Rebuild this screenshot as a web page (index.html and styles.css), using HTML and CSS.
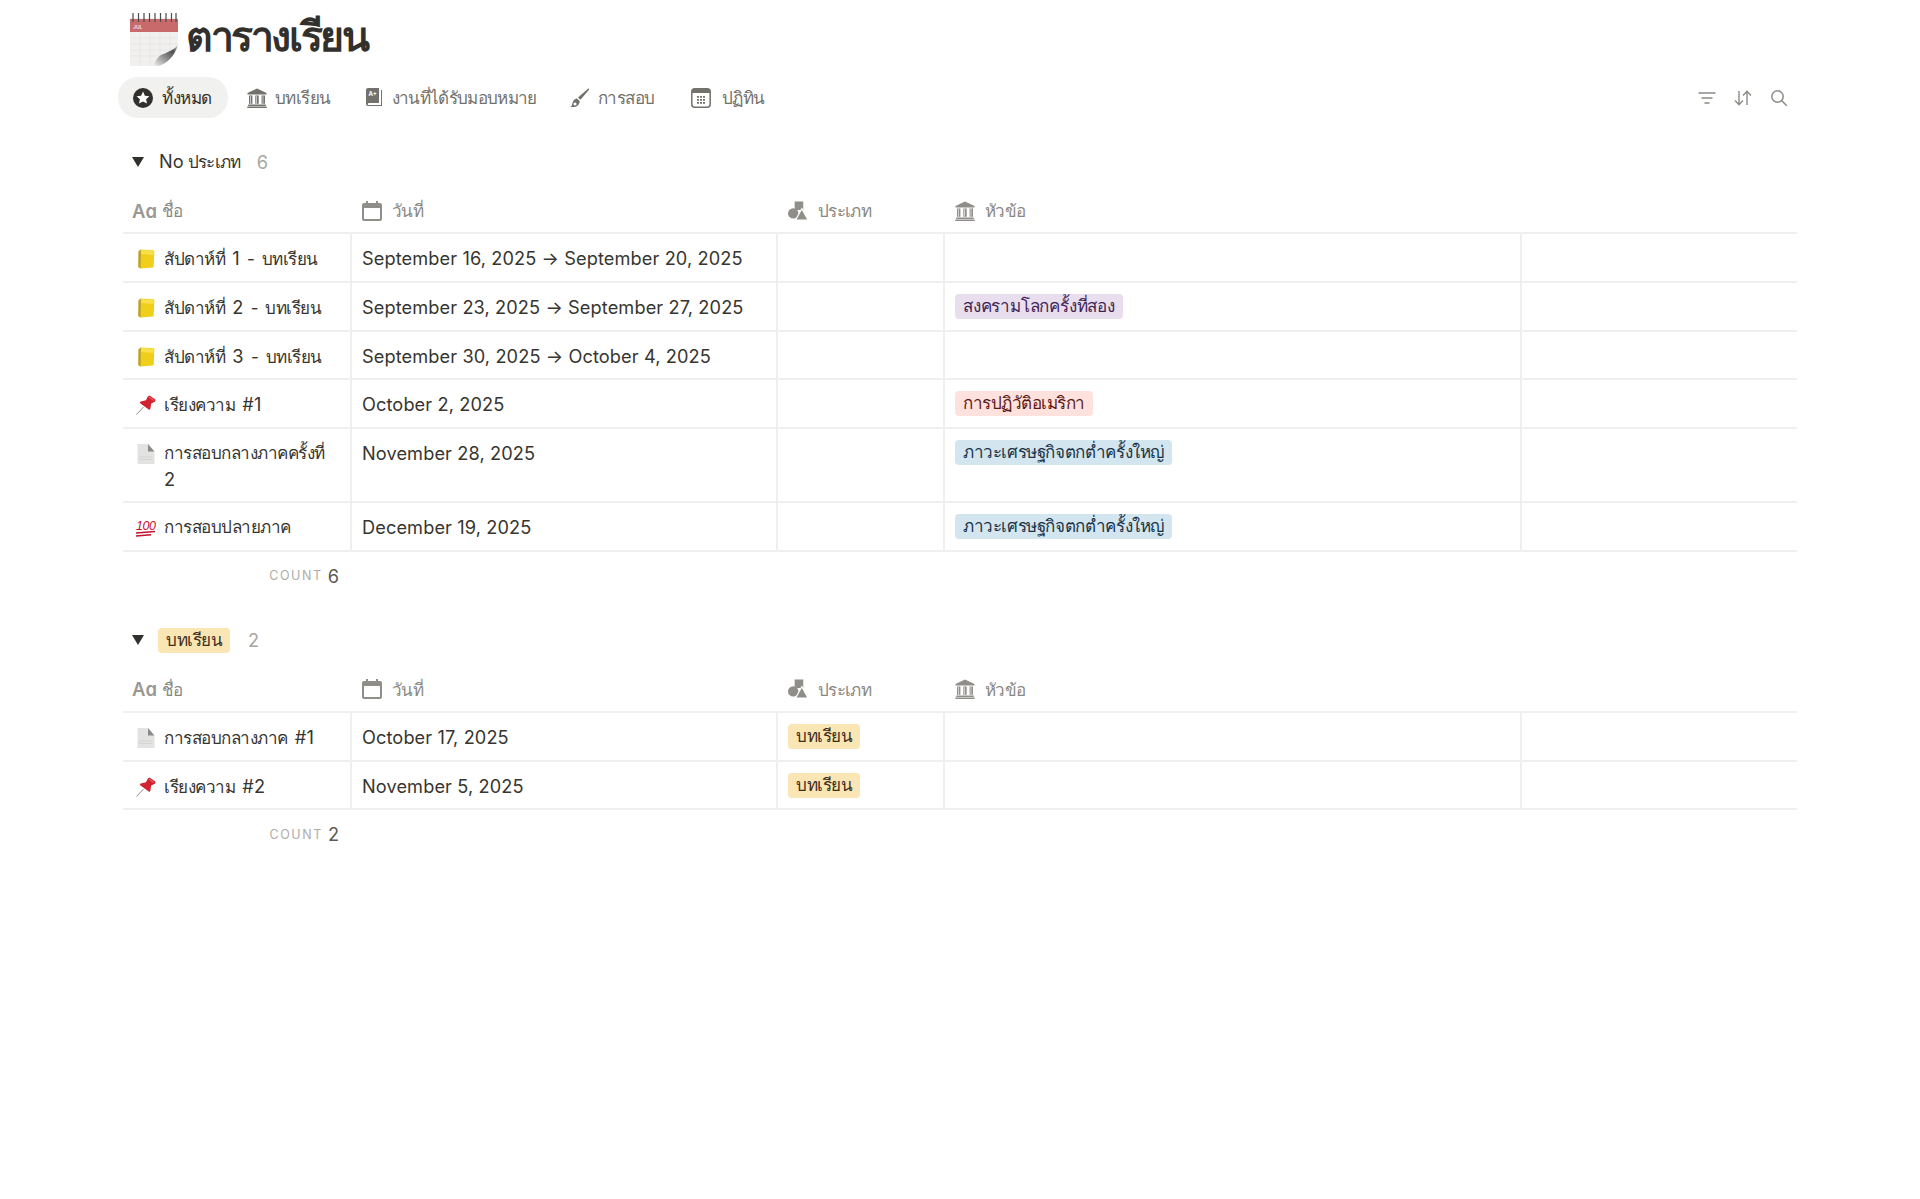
FILE: index.html
```html
<!DOCTYPE html>
<html lang="th">
<head>
<meta charset="utf-8">
<title>ตารางเรียน</title>
<link rel="stylesheet" href="styles.css">
</head>
<body>
<svg class="defs" width="0" height="0" aria-hidden="true">
  <defs>
    <linearGradient id="curl" x1="0" y1="1" x2="1" y2="0"><stop offset="0" stop-color="#f4f4f4"/><stop offset=".45" stop-color="#8c8c8c"/><stop offset=".75" stop-color="#4f4f4f"/><stop offset="1" stop-color="#c4c4c4"/></linearGradient>
    <symbol id="i-bank" viewBox="0 0 20 20"><path fill="currentColor" d="M10 .5 19.500 5v1.600H.5V5zM2 7.600h3.400v8.200H2zM8.300 7.600h3.400v8.200H8.300zM14.600 7.600H18v8.200h-3.400zM1.200 16.600h17.600V18H1.200zM.3 18.400h19.400V20H.3z"/><path fill="#fff" d="M3.100 7.900h.6v7.600h-.6zM9.400 7.900h.6v7.600h-.6zM15.700 7.900h.6v7.600h-.6z"/></symbol>
    <symbol id="i-cal" viewBox="0 0 20 20"><path fill="currentColor" fill-rule="evenodd" d="M4 0h2v2h8V0h2v2h2a2 2 0 0 1 2 2v14a2 2 0 0 1-2 2H2a2 2 0 0 1-2-2V4a2 2 0 0 1 2-2h2zM2 7v10.500a.5.500 0 0 0 .5.500h15a.5.500 0 0 0 .5-.500V7z"/></symbol>
    <symbol id="i-shapes" viewBox="0 0 21 20"><circle cx="5.500" cy="12.500" r="5.500" fill="currentColor"/><rect x="7" y="0" width="9" height="9" fill="currentColor"/><path d="M14.500 7.500 21 19.500H8z" fill="currentColor" stroke="#fff" stroke-width="1.200"/></symbol>
    <symbol id="i-note" viewBox="0 0 20 20"><path d="M3 1.500 5 .5l12.500.8c.5 0 .8.4.8.9l-.6 15.400c0 .5-.5.9-1 .9L4.500 19.500 2.400 18.200z" fill="#f0cf1a"/><path d="M2.400 2.400 5 .6l-.4 18.800-2.300-1.300z" fill="#b9a22c"/><path d="M5 1 17.600 1.700 17.300 6 5 5z" fill="#f7e04a"/></symbol>
    <symbol id="i-pin" viewBox="0 0 20 20"><path d="M.5 19.500 7.500 12" stroke="#8a8f99" stroke-width="1" fill="none"/><path d="M4.800 6.500 10 5.300 11.800 1.600c.4-.9 1.500-1.200 2.400-.7l4.800 3.400c.8.700.7 1.900-.2 2.400l-3.600 1.900L14.300 14c-.2.800-1 1-1.600.5L4.200 8.300c-.5-.5-.2-1.500.6-1.800z" fill="#d3222f"/><path d="M12.800 2 17.800 5.500" stroke="#f0737b" stroke-width="1" fill="none"/></symbol>
    <symbol id="i-doc" viewBox="0 0 20 20"><path d="M1.500 0H12l6.500 8v12h-17z" fill="#e3e3e1"/><path d="M12 0v7.500h6.500z" fill="#8b8b8b"/><path d="M3 13h13M3 15.500h13" stroke="#d0d0ce" stroke-width=".8"/></symbol>
  </defs>
</svg>

<div class="page">
  <header class="title-row">
    <svg class="title-icon" viewBox="0 0 48 54" aria-hidden="true">
      <rect x="0" y="6" width="48" height="48" fill="#f1f0ef"/>
      <rect x="0" y="7" width="48" height="13" fill="#c86a6c"/>
      <g stroke="#e2e1e0" stroke-width=".6"><path d="M0 26h48M0 32h48M0 38h48M0 44h48M10 20v34M20 20v34M30 20v34M40 20v34"/></g>
      <g stroke="#4a4a4a" stroke-width="1.200" fill="none"><path d="M3 1v9M8.500 1v9M14 1v9M19.500 1v9M25 1v9M30.500 1v9M36 1v9M41.500 1v9M46 1v9"/></g>
      <text x="3" y="17" class="cal-text">JUL</text>
      <path d="M48 34 48 54 26 54C36 50 43 42 48 34z" fill="#fff"/>
      <path d="M48 33c-4 5-10 7-17 10-3 2-6 6-8 11h6c8-3 15-9 19-21z" fill="url(#curl)"/>
    </svg>
    <h1 class="title">ตารางเรียน</h1>
  </header>

  <nav class="toolbar">
    <ul class="tabs">
      <li class="tab tab-active">
        <svg class="tab-icon" viewBox="0 0 20 20" aria-hidden="true"><circle cx="10" cy="10" r="10" fill="#32302c"/><path d="m10 3.600 1.900 4.100 4.500.5-3.300 3 .9 4.400L10 13.400l-4 2.200.9-4.400-3.300-3 4.500-.5z" fill="#fff"/></svg>
        ทั้งหมด
      </li>
      <li class="tab"><svg class="tab-icon"><use href="#i-bank"/></svg>บทเรียน</li>
      <li class="tab tab-narrow">
        <svg class="tab-icon" viewBox="0 0 20 20" aria-hidden="true"><path fill="currentColor" d="M2 2a2 2 0 0 1 2-2h11v15H4.500A2.500 2.500 0 0 0 3.800 16.900H17V2h1v16H4a2 2 0 0 1-2-2z"/><text x="4.500" y="8" class="book-text">A+</text></svg>
        งานที่ได้รับมอบหมาย
      </li>
      <li class="tab">
        <svg class="tab-icon" viewBox="0 0 20 20" aria-hidden="true"><path fill="currentColor" d="M18.800.8c.4.300.3.800 0 1.200L10.500 11.800 8 9.500 17.700.9c.3-.3.800-.4 1.100-.1z"/><path fill="currentColor" fill-rule="evenodd" d="M7 10.500 9.700 13c0 2.500-1.500 5.500-5.500 6-1.500.2-3 0-3.700-.5 1.500-.5 1.700-2 2-3.500.5-2.500 2-4.200 4.500-4.500zM5 14.500a1.500 1.500 0 1 0 .01 0z"/></svg>
        การสอบ
      </li>
      <li class="tab tab-cal">
        <svg class="tab-icon" viewBox="0 0 20 20" aria-hidden="true"><rect x=".8" y=".8" width="18.400" height="18.400" rx="3" fill="none" stroke="currentColor" stroke-width="1.500"/><path d="M1 1h18v4H1z" fill="currentColor"/><path d="M6 8h2v1.800H6zM9 8h2v1.800H9zM12 8h2v1.800h-2zM6 11h2v1.800H6zM9 11h2v1.800H9zM12 11h2v1.800h-2zM6 14h2v1.800H6zM9 14h2v1.800H9zM12 14h2v1.800h-2z" fill="currentColor"/></svg>
        ปฏิทิน
      </li>
    </ul>
    <div class="tools">
      <svg class="tool" viewBox="0 0 18 18" aria-hidden="true"><path d="M.5 4h17M3.500 9h11M6.500 14h5" stroke="currentColor" stroke-width="1.500" fill="none"/></svg>
      <svg class="tool" viewBox="0 0 18 18" aria-hidden="true"><path d="M5 2v13.500M1 11.500l4 4.300 4-4.300M13 16V2.500M9 6.500l4-4.300 4 4.300" stroke="currentColor" stroke-width="1.400" fill="none"/></svg>
      <svg class="tool" viewBox="0 0 18 18" aria-hidden="true"><circle cx="7.500" cy="7.500" r="5.700" stroke="currentColor" stroke-width="1.500" fill="none"/><path d="m11.800 11.800 5 5" stroke="currentColor" stroke-width="1.500"/></svg>
    </div>
  </nav>

  <section class="group">
    <div class="group-head">
      <span class="caret"></span>
      <span class="group-name"><span class="lat">No</span> ประเภท</span>
      <span class="group-count">6</span>
    </div>
    <div class="row head">
      <div class="hcell"><span class="aa">Aɑ</span>ชื่อ</div>
      <div class="hcell"><svg class="hicon"><use href="#i-cal"/></svg>วันที่</div>
      <div class="hcell"><svg class="hicon"><use href="#i-shapes"/></svg>ประเภท</div>
      <div class="hcell"><svg class="hicon"><use href="#i-bank"/></svg>หัวข้อ</div>
      <div class="hcell"></div>
    </div>
    <div class="row">
      <div class="cell name"><svg class="emoji"><use href="#i-note"/></svg><span>สัปดาห์ที่ <span class="lat">1</span> - บทเรียน</span></div>
      <div class="cell date">September 16, 2025 → September 20, 2025</div>
      <div class="cell"></div><div class="cell"></div><div class="cell last"></div>
    </div>
    <div class="row">
      <div class="cell name"><svg class="emoji"><use href="#i-note"/></svg><span>สัปดาห์ที่ <span class="lat">2</span> - บทเรียน</span></div>
      <div class="cell date">September 23, 2025 → September 27, 2025</div>
      <div class="cell"></div>
      <div class="cell"><span class="tag purple">สงครามโลกครั้งที่สอง</span></div>
      <div class="cell last"></div>
    </div>
    <div class="row">
      <div class="cell name"><svg class="emoji"><use href="#i-note"/></svg><span>สัปดาห์ที่ <span class="lat">3</span> - บทเรียน</span></div>
      <div class="cell date">September 30, 2025 → October 4, 2025</div>
      <div class="cell"></div><div class="cell"></div><div class="cell last"></div>
    </div>
    <div class="row">
      <div class="cell name"><svg class="emoji"><use href="#i-pin"/></svg><span>เรียงความ <span class="lat">#1</span></span></div>
      <div class="cell date">October 2, 2025</div>
      <div class="cell"></div>
      <div class="cell"><span class="tag red">การปฏิวัติอเมริกา</span></div>
      <div class="cell last"></div>
    </div>
    <div class="row tall">
      <div class="cell name"><svg class="emoji"><use href="#i-doc"/></svg><span>การสอบกลางภาคครั้งที่ <span class="lat">2</span></span></div>
      <div class="cell date">November 28, 2025</div>
      <div class="cell"></div>
      <div class="cell"><span class="tag blue">ภาวะเศรษฐกิจตกต่ำครั้งใหญ่</span></div>
      <div class="cell last"></div>
    </div>
    <div class="row">
      <div class="cell name"><svg class="emoji" viewBox="0 0 20 20" aria-hidden="true"><text x="0" y="12" class="hundred">100</text><path d="M0 15 19 13.500M0 18 15 16.800" stroke="#c8102e" stroke-width="1.400"/></svg><span>การสอบปลายภาค</span></div>
      <div class="cell date">December 19, 2025</div>
      <div class="cell"></div>
      <div class="cell"><span class="tag blue">ภาวะเศรษฐกิจตกต่ำครั้งใหญ่</span></div>
      <div class="cell last"></div>
    </div>
    <div class="count"><span class="count-label">COUNT</span><span class="count-num">6</span></div>
  </section>

  <section class="group group-second">
    <div class="group-head">
      <span class="caret"></span>
      <span class="tag yellow head-tag">บทเรียน</span>
      <span class="group-count">2</span>
    </div>
    <div class="row head">
      <div class="hcell"><span class="aa">Aɑ</span>ชื่อ</div>
      <div class="hcell"><svg class="hicon"><use href="#i-cal"/></svg>วันที่</div>
      <div class="hcell"><svg class="hicon"><use href="#i-shapes"/></svg>ประเภท</div>
      <div class="hcell"><svg class="hicon"><use href="#i-bank"/></svg>หัวข้อ</div>
      <div class="hcell"></div>
    </div>
    <div class="row">
      <div class="cell name"><svg class="emoji"><use href="#i-doc"/></svg><span>การสอบกลางภาค <span class="lat">#1</span></span></div>
      <div class="cell date">October 17, 2025</div>
      <div class="cell"><span class="tag yellow">บทเรียน</span></div>
      <div class="cell"></div><div class="cell last"></div>
    </div>
    <div class="row">
      <div class="cell name"><svg class="emoji"><use href="#i-pin"/></svg><span>เรียงความ <span class="lat">#2</span></span></div>
      <div class="cell date">November 5, 2025</div>
      <div class="cell"><span class="tag yellow">บทเรียน</span></div>
      <div class="cell"></div><div class="cell last"></div>
    </div>
    <div class="count"><span class="count-label">COUNT</span><span class="count-num">2</span></div>
  </section>
</div>
</body>
</html>
```
FILE: styles.css
```css
* { box-sizing: border-box; }
html, body { margin: 0; padding: 0; background: #fff; }
body {
  font-family: Inter, "Noto Sans", "Noto Sans CJK SC", sans-serif;
  color: #37352f;
  font-size: 17px;
  letter-spacing: -.5px;
  height: 1199px;
  overflow: hidden;
}
.defs { position: absolute; }
.page { padding: 0 123px 0 118px; }
.lat { font-size: 18.200px; letter-spacing: .1px; }

.title-row { display: flex; align-items: center; height: 77px; padding: 0 0 0 12px; gap: 8px; }
.title-icon { width: 48px; height: 54px; flex: none; }
.cal-text { font: 700 5px Inter, sans-serif; fill: #f5dede; letter-spacing: 0; }
.title { margin: 0 0 4px; font-size: 41px; font-weight: 700; color: #32302c; line-height: 1; letter-spacing: -2.400px; }

.toolbar { display: flex; justify-content: space-between; align-items: center; height: 41px; }
.tabs { display: flex; list-style: none; margin: 0; padding: 0; gap: 4px; }
.tab { display: flex; align-items: center; gap: 8px; height: 41px; padding: 0 14px 0 15px; border-radius: 20px; color: #73716c; }
.tab-active { background: #f1f1ef; color: #32302c; gap: 9px; padding-right: 16px; }
.tab-narrow { letter-spacing: -.650px; }
.tab-cal { margin-left: 3px; gap: 11px; }
.tab-icon { width: 20px; height: 20px; flex: none; color: #73716c; }
.tab-active .tab-icon { color: #32302c; }
.book-text { font: 700 6px Inter, sans-serif; fill: #fff; letter-spacing: 0; }
.tools { display: flex; gap: 18px; padding-right: 9px; color: #8d8b86; }
.tool { width: 18px; height: 18px; }

.group { margin-left: 5px; }
.group-head { display: flex; align-items: center; height: 25px; margin-top: 31px; padding-left: 9px; }
.caret { width: 0; height: 0; border-left: 6px solid transparent; border-right: 6px solid transparent; border-top: 10px solid #32302c; margin-right: 15px; }
.group-name { color: #37352f; letter-spacing: -.7px; }
.group-count { margin-left: 16px; color: #a8a6a1; font-size: 18.200px; letter-spacing: 0; }

.row { display: grid; grid-template-columns: 229px 426px 167px 577px 275px; height: 48.750px; border-bottom: 2px solid #f0efed; }
.row.head { height: 48px; margin-top: 12px; }
.row.tall { height: 74px; }
.hcell { display: flex; align-items: center; gap: 10px; padding: 3px 0 0 10px; color: #8a8882; letter-spacing: -.7px; }
.hcell:first-child { padding-left: 9px; gap: 10px; }
.aa { font-weight: 600; font-size: 18.500px; letter-spacing: 0; color: #9a9893; width: 21px; margin-right: -1px; }
.hicon { width: 20px; height: 20px; flex: none; color: #908e89; }

.cell { padding: 11px 10px 0 10px; border-right: 2px solid #f0efed; line-height: 26px; }
.cell.last { border-right: 0; }
.date { font-size: 18.200px; letter-spacing: .1px; }
.name { display: flex; gap: 8px; padding-left: 13px; word-spacing: 3px; }
.name span { min-width: 0; }
.emoji { width: 20px; height: 20px; flex: none; margin-top: 4px; }
.hundred { font: italic 400 12.500px "Liberation Sans", sans-serif; fill: #c8102e; letter-spacing: -.5px; word-spacing: 0; }

.tag { display: inline-block; height: 25px; line-height: 25px; padding: 0 8px; border-radius: 4px; vertical-align: top; white-space: nowrap; }
.yellow { background: #f9e6b4; color: #402c1b; }
.purple { background: #e8deee; color: #412454; letter-spacing: -.2px; }
.red { background: #ffe2dd; color: #5d1715; }
.blue { background: #d3e5ef; color: #183347; letter-spacing: -.4px; }
.head-tag { margin: 0 2px 0 -1px; }

.count { width: 229px; height: 48px; display: flex; justify-content: flex-end; align-items: center; gap: 5px; padding-right: 13px; letter-spacing: 0; }
.count-label { font-size: 12.500px; letter-spacing: 1.600px; color: #aeaca7; }
.count-num { font-size: 18.200px; color: #5c5a55; }
.group-second .group-head { margin-top: 28px; }
.group-second .row.head { margin-top: 12px; }
```
